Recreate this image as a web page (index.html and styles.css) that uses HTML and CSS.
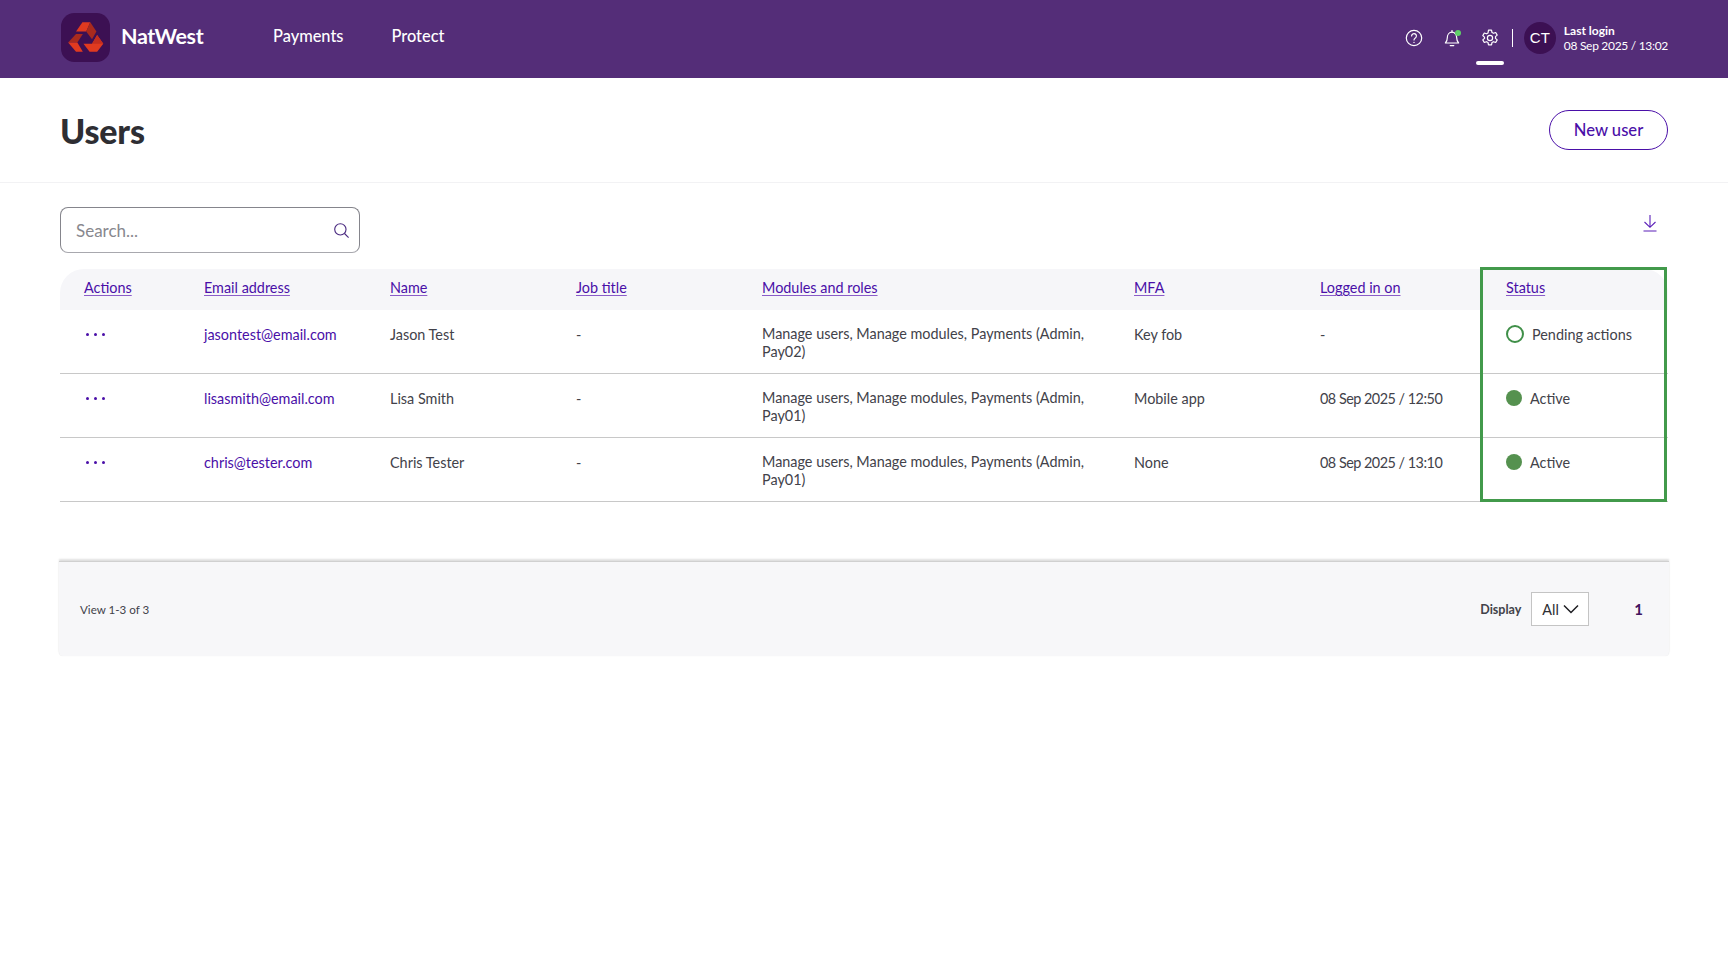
FILE: index.html
```html
<!DOCTYPE html>
<html lang="en">
<head>
<meta charset="utf-8">
<title>Users</title>
<link rel="stylesheet" href="styles.css">
</head>
<body>
<header class="topbar">
  <div class="brand">
    <svg class="logo" viewBox="0 0 48 48" aria-hidden="true">
      <rect width="48" height="48" rx="13" fill="#3c1053"/>
      <polygon points="14.7,18 21,9 28.7,9 24.7,18" fill="#e03a20"/>
      <polygon points="28.7,9 34.7,18 30.4,25.6 24.7,18" fill="#a92a1e"/>
      <polygon points="14.7,20.6 21.4,20.6 16,29 7,29" fill="#a92a1e"/>
      <polygon points="7,29 16,29 21.4,38 14.7,38" fill="#e03a20"/>
      <polygon points="22,30 30.4,30 35.4,21.6 41.4,30 35.4,38 28,38" fill="#e03a20"/>
      <polygon points="35.4,21.6 41.4,30 30.4,30" fill="#c32e1f"/>
    </svg>
    <span class="wordmark">NatWest</span>
  </div>
  <nav class="mainnav">
    <a class="navlink">Payments</a>
    <a class="navlink">Protect</a>
  </nav>
  <div class="tools">
    <svg class="tool help" viewBox="0 0 20 20" aria-hidden="true"><circle cx="10" cy="10" r="7.7"/><path d="M7.6 8a2.4 2.4 0 1 1 3.7 2c-.9.6-1.3 1-1.3 2"/><circle class="fillw" cx="10" cy="14.4" r=".7"/></svg>
    <span class="bellwrap">
      <svg class="tool" viewBox="0 0 20 20" aria-hidden="true"><path d="M3.4 15h13.2c-1.3-1.3-1.9-2.6-1.9-5.2 0-3-1.9-5.6-4.7-5.6S5.3 6.800 5.300 9.800c0 2.600-.6 3.900-1.900 5.200Z"/><path d="M8.200 17.600h3.600"/><path d="M10 2.600v1.600"/></svg>
      <span class="belldot"></span>
    </span>
    <span class="gearwrap">
      <svg class="tool" viewBox="0 0 20 20" aria-hidden="true"><circle cx="10" cy="10" r="2.600"/><path d="M8.500 2.200h3l.5 2.300 1.500.8 2.200-.8 1.500 2.600-1.700 1.500v1.800l1.700 1.500-1.500 2.600-2.200-.8-1.500.8-.5 2.300h-3l-.5-2.300-1.500-.8-2.200.8-1.500-2.600 1.700-1.500V9.100L2.800 7.600l1.500-2.600 2.200.8 1.500-.8Z"/></svg>
    </span>
    <span class="divider"></span>
    <span class="avatar">CT</span>
    <div class="login">
      <strong class="login-title">Last login</strong>
      <span class="login-date">08 Sep 2025 / 13:02</span>
    </div>
  </div>
</header>

<section class="titlebar">
  <h1 class="title">Users</h1>
  <button class="newuser">New user</button>
</section>

<main class="content">
  <div class="toolbar">
    <div class="search">
      <span class="placeholder">Search...</span>
      <svg class="searchicon" viewBox="0 0 18 18" aria-hidden="true"><circle cx="7.800" cy="7.800" r="6"/><path d="m12.200 12.200 4.300 4.300"/></svg>
    </div>
    <svg class="download" viewBox="0 0 16 18" aria-hidden="true"><path d="M8 1v12M2.500 8 8 13.300 13.500 8M1.500 17h13"/></svg>
  </div>

  <div class="tablewrap">
    <div class="row head">
      <a class="cell hl">Actions</a><a class="cell hl">Email address</a><a class="cell hl">Name</a><a class="cell hl">Job title</a><a class="cell hl">Modules and roles</a><a class="cell hl">MFA</a><a class="cell hl">Logged in on</a><a class="cell hl">Status</a>
    </div>
    <div class="row">
      <span class="cell dots"><i></i><i></i><i></i></span>
      <a class="cell email">jasontest@email.com</a>
      <span class="cell">Jason Test</span>
      <span class="cell">-</span>
      <span class="cell modules">Manage users, Manage modules, Payments (Admin, Pay02)</span>
      <span class="cell">Key fob</span>
      <span class="cell">-</span>
      <span class="cell status"><i class="ring"></i>Pending actions</span>
    </div>
    <div class="row">
      <span class="cell dots"><i></i><i></i><i></i></span>
      <a class="cell email">lisasmith@email.com</a>
      <span class="cell">Lisa Smith</span>
      <span class="cell">-</span>
      <span class="cell modules">Manage users, Manage modules, Payments (Admin, Pay01)</span>
      <span class="cell">Mobile app</span>
      <span class="cell date">08 Sep 2025 / 12:50</span>
      <span class="cell status"><i class="dot"></i>Active</span>
    </div>
    <div class="row">
      <span class="cell dots"><i></i><i></i><i></i></span>
      <a class="cell email">chris@tester.com</a>
      <span class="cell">Chris Tester</span>
      <span class="cell">-</span>
      <span class="cell modules">Manage users, Manage modules, Payments (Admin, Pay01)</span>
      <span class="cell">None</span>
      <span class="cell date">08 Sep 2025 / 13:10</span>
      <span class="cell status"><i class="dot"></i>Active</span>
    </div>
    <div class="highlight"></div>
  </div>

  <footer class="pager">
    <span class="count">View 1-3 of 3</span>
    <div class="pagectl">
      <span class="displaylabel">Display</span>
      <span class="select">All<svg class="chev" viewBox="0 0 16 10" aria-hidden="true"><path d="m1 1.500 7 7 7-7"/></svg></span>
      <span class="pagenum">1</span>
    </div>
  </footer>
</main>
</body>
</html>
```
FILE: styles.css
```css
* { box-sizing: border-box; }
html, body { margin: 0; background: #fff; }
body { font-family: "Lato", "Noto Sans", sans-serif; color: #42424a; font-size: 14.4px; height: 954px; overflow: hidden; }

.topbar { height: 78px; background: #542d78; color: #fff; display: flex; align-items: center; padding: 0 60px 0 61px; }
.brand { display: flex; align-items: center; gap: 11px; width: 212px; margin-top: -4px; }
.logo { width: 49px; height: 49px; display: block; flex: none; }
.wordmark { font-size: 21.500px; font-weight: 700; letter-spacing: -0.35px; margin-top: -2px; }
.mainnav { display: flex; gap: 48px; margin-top: -7px; }
.navlink { font-size: 16.4px; font-weight: 500; }
.tools { margin-left: auto; display: flex; align-items: center; margin-top: -3px; }
.tool { width: 20px; height: 20px; display: block; fill: none; stroke: #fff; stroke-width: 1.2; stroke-linecap: round; stroke-linejoin: round; }
.fillw { fill: #fff; stroke: none; }
.bellwrap { position: relative; margin-left: 18px; }
.belldot { position: absolute; top: 2px; right: 1px; width: 6px; height: 6px; border-radius: 50%; background: #5fd068; }
.gearwrap { position: relative; margin-left: 18px; }
.gearwrap::after { content: ""; position: absolute; left: -4px; right: -4px; bottom: -17px; height: 4px; border-radius: 2px; background: #fff; }
.divider { width: 1px; height: 18px; background: #fff; margin: 0 11px 0 12px; }
.avatar { width: 32px; height: 32px; border-radius: 50%; background: #3c1053; display: flex; align-items: center; justify-content: center; font-size: 15px; font-family: "Liberation Sans", sans-serif; }
.login { margin-left: 8px; display: flex; flex-direction: column; font-size: 12px; line-height: 15px; }
.login-title { font-weight: 700; }
.login-date { letter-spacing: -0.3px; }

.titlebar { height: 105px; border-bottom: 1px solid #f2f2f4; display: flex; align-items: center; justify-content: space-between; padding: 0 60px; }
.title { margin: 0; font-size: 34px; font-weight: 900; letter-spacing: -0.2px; color: #2e2e33; }
.newuser { width: 119px; height: 40px; border: 1px solid #4a0fa8; border-radius: 20px; background: #fff; color: #4a0fa8; font: 500 16.600px "Lato", sans-serif; padding: 0; }

.content { padding: 24px 60px 0; }
.toolbar { display: flex; justify-content: space-between; align-items: flex-start; height: 62px; }
.search { width: 300px; height: 46px; border: 1px solid #85858c; border-bottom-color: #a8a8ae; border-radius: 8px; display: flex; align-items: center; justify-content: space-between; padding: 0 9px 0 15px; }
.placeholder { color: #88888e; font-size: 17px; }
.searchicon { width: 17px; height: 17px; fill: none; stroke: #4a2a80; stroke-width: 1.200; }
.download { width: 16px; height: 18px; margin: 7px 10px 0 0; fill: none; stroke: #5a1fb8; stroke-width: 1.100; }

.tablewrap { position: relative; }
.row { display: grid; grid-template-columns: 120px 186px 186px 186px 372px 186px 186px 186px; height: 64px; border-bottom: 1px solid #c8c8c8; }
.head { height: 41px; background: #f6f6f9; border-bottom: 0; border-radius: 24px 24px 0 0; align-items: center; }
.cell { padding: 16px 24px 0; line-height: 18px; }
.modules { padding-top: 15px; }
.head .cell { padding-top: 0; padding-bottom: 3px; }
.date { letter-spacing: -0.5px; }
.hl { color: #4a0fa8; text-decoration: underline; text-decoration-color: #8a5cc8; text-underline-offset: 2px; }
.email { color: #4a0fa8; }
.dots { display: flex; gap: 5px; padding-top: 23px; padding-left: 26px; }
.dots i { width: 3px; height: 3px; border-radius: 50%; background: #4a0fa8; }
.status { display: flex; align-items: flex-start; }
.dot { width: 16px; height: 16px; border-radius: 50%; background: #55914f; margin: 0 8px 0 0; flex: none; }
.ring { width: 18px; height: 18px; border-radius: 50%; border: 2px solid #3f8f48; margin: -1px 8px 0 0; flex: none; }
.highlight { position: absolute; left: 1420px; top: -2px; width: 187px; height: 235px; border: 3px solid #429a4b; pointer-events: none; }

.pager { height: 95px; margin: 59px -1px 0; background: #f7f7f9; border-top: 1px solid #d0d0d0; box-shadow: 0 -2px 2px rgba(0,0,0,.12), 0 0 1px rgba(0,0,0,.1); border-radius: 0 0 4px 4px; display: flex; align-items: center; justify-content: space-between; padding: 0 26px 0 21px; }
.count { font-size: 11.600px; }
.pagectl { display: flex; align-items: center; }
.displaylabel { font-size: 12.500px; font-weight: 700; }
.select { width: 58px; height: 34px; margin-left: 10px; background: #fff; border: 1px solid #c4c4c4; display: flex; align-items: center; padding-left: 10px; gap: 4px; color: #2e2e33; font-size: 14.400px; }
.chev { width: 16px; height: 10px; fill: none; stroke: #1e1e22; stroke-width: 1.500; }
.pagenum { margin-left: 45px; color: #42145f; font-weight: 700; font-size: 15px; }
```
